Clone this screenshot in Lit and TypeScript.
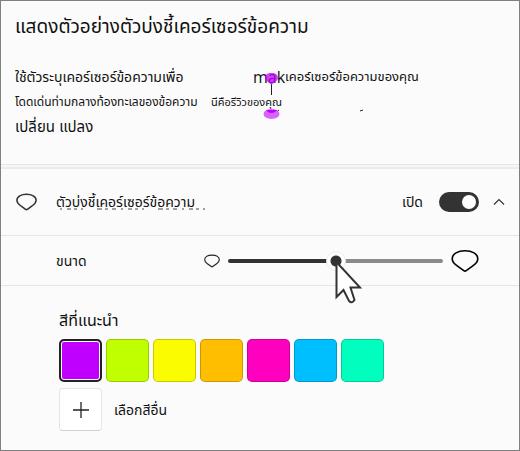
import { LitElement, html, css, svg } from "lit";
import { customElement, property, state } from "lit/decorators.js";
import { styleMap } from "lit/directives/style-map.js";

@customElement("cursor-shape")
export class CursorShape extends LitElement {
  @property({ type: Number }) stroke = 2;

  static styles = css`
    :host { display: block; }
    svg { display: block; width: 100%; height: 100%; }
  `;

  render() {
    return html`<svg viewBox="0 0 28 23" aria-hidden="true">
      ${svg`<path d="M14 1.2C21 1.2 26.8 4.2 26.8 9.2C26.8 13 24.5 14.4 21.5 16.6L15.2 21.2Q14 22.2 12.8 21.2L6.5 16.6C3.5 14.4 1.2 13 1.2 9.2C1.2 4.2 7 1.2 14 1.2Z"
        fill="none" stroke="currentColor" stroke-width=${this.stroke} stroke-linejoin="round" />`}
    </svg>`;
  }
}

@customElement("app-root")
export class AppRoot extends LitElement {
  @state() private enabled = true;
  @state() private selected = 0;

  private swatches = [
    { name: "ม่วง", color: "#bf00ff" },
    { name: "เขียวมะนาว", color: "#bfff00" },
    { name: "เหลือง", color: "#fcfc00" },
    { name: "ส้ม", color: "#ffbf00" },
    { name: "ชมพู", color: "#ff00bf" },
    { name: "ฟ้า", color: "#00bfff" },
    { name: "เขียวน้ำทะเล", color: "#00ffbf" },
  ];

  static styles = css`
    :host {
      display: block;
      box-sizing: border-box;
      min-height: 100vh;
      border: 1px solid #808080;
      background: #fbfbfb;
      color: #111;
      font-family: "Liberation Sans", "Noto Sans Thai", sans-serif;
      font-size: 14px;
      line-height: 24px;
    }
    * { box-sizing: border-box; }
    h1, h2, p { margin: 0; font-weight: 400; white-space: nowrap; }
    h1 { font-size: 19px; line-height: 28px; }
    h2 { font-size: 16px; line-height: 24px; }
    .preview { padding: 12px 14px 25px; }
    .sample { position: relative; padding-top: 23px; }
    .line { display: flex; align-items: center; height: 25px; white-space: nowrap; }
    .change { font-size: 15px; }
    .note { font-size: 12px; }
    .tail { font-size: 13px; }
    .lead { width: 238px; }
    .short { width: 196px; }
    .review { font-size: 11px; }
    .latin { font-family: "Open Sans", sans-serif; font-size: 16px; }
    .marker { position: absolute; left: 245px; top: 23px; width: 104px; height: 56px; }
    .band { height: 5px; border-top: 1px solid #e5e5e5; border-bottom: 2px solid #ebebeb; background: #f7f7f7; }
    .row { display: flex; align-items: center; border-bottom: 1px solid #e5e5e5; }
    .toggle-row { height: 67px; padding: 0 14px 0 15px; }
    .size-row { height: 50px; padding: 0 40px 0 55px; }
    .shape { width: 21px; height: 18px; color: #333; margin-right: 19px; }
    .name { position: relative; flex: 1; white-space: nowrap; }
    .trace { position: absolute; left: 2px; bottom: 4px; width: 150px; height: 2px; }
    .switch {
      appearance: none; margin: 0 14px 0 16px; width: 40px; height: 20px; padding: 3px;
      border-radius: 10px; background: #8a8a8a; display: flex;
    }
    .switch::before { content: ""; width: 14px; height: 14px; border-radius: 50%; background: #fff; }
    .switch:checked { background: #333; justify-content: flex-end; }
    button { font: inherit; color: inherit; padding: 0; border: 0; background: none; }
    .expand { width: 12px; height: 20px; display: flex; align-items: center; }
    .size-name { flex: 1; }
    .small { width: 16px; height: 14px; color: #222; }
    .large { width: 28px; height: 24px; color: #000; }
    .slider { position: relative; width: 215px; margin: 0 8px; height: 20px; }
    .slider input { appearance: none; display: block; width: 100%; height: 20px; margin: 0; background: none; }
    .slider input::-webkit-slider-runnable-track {
      height: 4px; border-radius: 2px; background: linear-gradient(to right, #2f3432 50%, #8a8a8a 50%);
    }
    .slider input::-webkit-slider-thumb {
      appearance: none; width: 20px; height: 20px; margin-top: -8px; border-radius: 50%;
      border: 1px solid #ececec; background: radial-gradient(circle, #333 0 5px, #fff 6px);
    }
    .pointer { position: absolute; left: 106px; top: 8px; width: 28px; height: 46px; }
    .colors { padding: 23px 58px 16px; }
    .swatches { display: flex; gap: 4px; margin: 6px 0; }
    .swatch { width: 43px; height: 43px; border-radius: 5px; border: 1px solid #0003; }
    .swatch.on { border: 2px solid #222; box-shadow: inset 0 0 0 1px #fff; }
    .other { display: flex; align-items: center; gap: 12px; }
    .plus {
      width: 43px; height: 43px; border: 1px solid #e5e5e5; border-bottom-color: #d0d0d0; border-radius: 4px;
      background: #fff; display: grid; place-items: center;
    }
  `;

  render() {
    return html`
      <section class="preview">
        <h1>แสดงตัวอย่างตัวบ่งชี้เคอร์เซอร์ข้อความ</h1>
        <div class="sample">
          <div class="line"><span class="lead">ใช้ตัวระบุเคอร์เซอร์ข้อความเพื่อ</span><span class="latin">mak</span><span class="tail">เคอร์เซอร์ข้อความของคุณ</span></div>
          <div class="line note"><span class="short">โดดเด่นท่ามกลางท้องทะเลของข้อความ</span><span class="review">นีคือรีวิวของคุณ</span></div>
          <div class="line change">เปลี่ยน แปลง</div>
          <svg class="marker" viewBox="0 0 104 56" aria-hidden="true">
            <path d="M11.5 20V31" stroke="#222" stroke-width="1" />
            <path d="M11.5 9C16 9 18 11 18 14C18 17 14 18 11.5 21C9 18 5 17 5 14C5 11 7 9 11.5 9Z" fill="#bf00ff" opacity=".75" />
            <ellipse cx="11.5" cy="50" rx="8" ry="5" fill="#bf00ff" opacity=".6" />
            <path d="M6 46H17Q15 49 11.5 49Q8 49 6 46Z" fill="#bf00ff" />
            <path d="M17.5 47L19 46M100 47L103 46" stroke="#222" stroke-width="1" />
          </svg>
        </div>
      </section>
      <div class="band"></div>
      <section>
        <div class="row toggle-row">
          <cursor-shape class="shape" .stroke=${2}></cursor-shape>
          <label class="name" for="enabled">ตัวบ่งชี้เคอร์เซอร์ข้อความ
            <svg class="trace" viewBox="0 0 150 2" aria-hidden="true">
              <path d="M2 1H150" stroke="#444" stroke-dasharray="2 5 4 3 3 4 2 14 5 3 3 4 4 5" />
            </svg>
          </label>
          <span>เปิด</span>
          <input id="enabled" class="switch" type="checkbox" role="switch" .checked=${this.enabled}
            @change=${() => (this.enabled = !this.enabled)} />
          <button class="expand" aria-label="ยุบ">
            <svg width="12" height="8" viewBox="0 0 12 8"><path d="M1 6.5L6 1.5L11 6.5" fill="none" stroke="#333" stroke-width="1.2" /></svg>
          </button>
        </div>
        <div class="row size-row">
          <label class="size-name" for="size">ขนาด</label>
          <cursor-shape class="small" .stroke=${2}></cursor-shape>
          <div class="slider">
            <input id="size" type="range" min="0" max="100" value="50" />
            <svg class="pointer" viewBox="0 0 28 46" aria-hidden="true">
              <path d="M2.5 3V38L9.5 31L15 42Q18 45 20.5 41L16.5 28.5H26Z" fill="#fff" stroke="#333" stroke-width="2" />
            </svg>
          </div>
          <cursor-shape class="large" .stroke=${1.6}></cursor-shape>
        </div>
        <div class="colors">
          <h2>สีที่แนะนำ</h2>
          <div class="swatches">
            ${this.swatches.map((s, i) => html`<button class="swatch ${i === this.selected ? "on" : ""}"
              aria-label=${s.name} style=${styleMap({ backgroundColor: s.color })}
              @click=${() => (this.selected = i)}></button>`)}
          </div>
          <div class="other">
            <button class="plus" id="other" aria-labelledby="other-label">
              <svg width="16" height="16" viewBox="0 0 16 16"><path d="M8 0V16M0 8H16" stroke="#222" stroke-width="1.3" /></svg>
            </button>
            <label id="other-label" for="other">เลือกสีอื่น</label>
          </div>
        </div>
      </section>
    `;
  }
}
